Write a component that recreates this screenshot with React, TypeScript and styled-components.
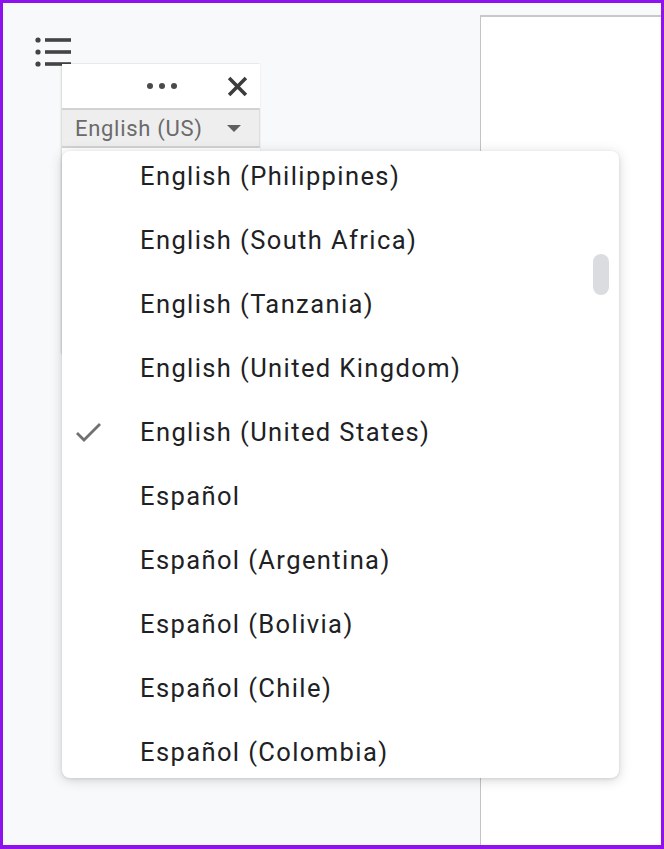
import React from 'react';
import styled, { createGlobalStyle } from 'styled-components';

const Global = createGlobalStyle`
  html, body {
    margin: 0;
    padding: 0;
    background: #ffffff;
  }
  body {
    font-family: Roboto, "Liberation Sans", Arial, sans-serif;
  }
`;

const Frame = styled.div`
  position: relative;
  width: 664px;
  height: 849px;
  box-sizing: border-box;
  border: 3px solid #8e12ee;
  border-bottom: 4px solid #8e12ee;
  background: #f8f9fa;
  display: flex;
  overflow: hidden;
`;

const Canvas = styled.div`
  flex: 1;
  padding: 33px 0 0 29px;
`;

const Page = styled.div`
  width: 180px;
  margin-top: 12px;
  background: #ffffff;
  border-left: 1px solid #c4c4c4;
  border-top: 2px solid #c8c8c8;
`;

const ListIcon = styled.svg`
  display: block;
  width: 40px;
  height: 34px;
`;

const Toolbar = styled.div`
  position: absolute;
  left: 59px;
  top: 61px;
  width: 198px;
  height: 290px;
  background: #ffffff;
  box-shadow: -1px 0 2px rgba(0, 0, 0, 0.12), 0 0 1px rgba(0, 0, 0, 0.15);
`;

const ToolbarTop = styled.div`
  height: 44px;
  display: flex;
  align-items: center;
  justify-content: flex-end;
  gap: 50px;
  padding-right: 12px;
`;

const Dots = styled.span`
  display: flex;
  gap: 6px;
  span {
    width: 6px;
    height: 6px;
    border-radius: 50%;
    background: #4a4a4a;
  }
`;

const Select = styled.div`
  height: 40px;
  box-sizing: border-box;
  display: flex;
  align-items: center;
  justify-content: space-between;
  padding: 0 18px 0 13px;
  background: #eeeeee;
  border-top: 2px solid #d2d2d2;
  border-bottom: 2px solid #d2d2d2;
  border-right: 1px solid #dddddd;
  color: #6a6a6a;
  font-size: 22px;
  letter-spacing: 0.7px;
`;

const Caret = styled.span`
  width: 0;
  height: 0;
  border-left: 7px solid transparent;
  border-right: 7px solid transparent;
  border-top: 7px solid #5f5f5f;
`;

const Dropdown = styled.div`
  position: absolute;
  left: 59px;
  top: 148px;
  width: 557px;
  height: 627px;
  background: #ffffff;
  border-radius: 8px;
  box-shadow: 0 2px 12px rgba(60, 64, 67, 0.22), 0 1px 3px rgba(60, 64, 67, 0.12);
  overflow: hidden;
`;

const List = styled.ul`
  list-style: none;
  margin: -7px 0 0 0;
  padding: 0;
`;

const Item = styled.li`
  position: relative;
  height: 64px;
  display: flex;
  align-items: center;
  padding-left: 78px;
  font-size: 25.5px;
  color: #202124;
  letter-spacing: 1.4px;
`;

const Check = styled.svg`
  position: absolute;
  left: 13px;
  top: 21px;
  width: 27px;
  height: 24px;
`;

const Thumb = styled.div`
  position: absolute;
  right: 10px;
  top: 103px;
  width: 16px;
  height: 41px;
  border-radius: 8px;
  background: #dadce0;
`;

const languages = [
  'English (Philippines)',
  'English (South Africa)',
  'English (Tanzania)',
  'English (United Kingdom)',
  'English (United States)',
  'Español',
  'Español (Argentina)',
  'Español (Bolivia)',
  'Español (Chile)',
  'Español (Colombia)',
];

const selected = 'English (United States)';

export default function App() {
  return (
    <>
      <Global />
      <Frame>
        <Canvas>
          <ListIcon viewBox="0 0 40 34">
            <circle cx="6" cy="4" r="2.6" fill="#444" />
            <circle cx="6" cy="16" r="2.6" fill="#444" />
            <circle cx="6" cy="28" r="2.6" fill="#444" />
            <rect x="13" y="2.2" width="26" height="3.6" fill="#444" />
            <rect x="13" y="14.2" width="26" height="3.6" fill="#444" />
            <rect x="13" y="26.2" width="26" height="3.6" fill="#444" />
          </ListIcon>
        </Canvas>
        <Page />

        <Toolbar>
          <ToolbarTop>
            <Dots>
              <span />
              <span />
              <span />
            </Dots>
            <svg width="21" height="21" viewBox="0 0 20 20">
              <path d="M2 2 L18 18 M18 2 L2 18" stroke="#3c3c3c" strokeWidth="3.4" strokeLinecap="butt" />
            </svg>
          </ToolbarTop>
          <Select>
            <span>English (US)</span>
            <Caret />
          </Select>
        </Toolbar>

        <Dropdown>
          <List>
            {languages.map(lang => (
              <Item key={lang}>
                {lang === selected && (
                  <Check viewBox="0 0 27 24">
                    <path d="M2 12 L9 19 L25 3" fill="none" stroke="#707070" strokeWidth="2.8" />
                  </Check>
                )}
                {lang}
              </Item>
            ))}
          </List>
          <Thumb />
        </Dropdown>
      </Frame>
    </>
  );
}
